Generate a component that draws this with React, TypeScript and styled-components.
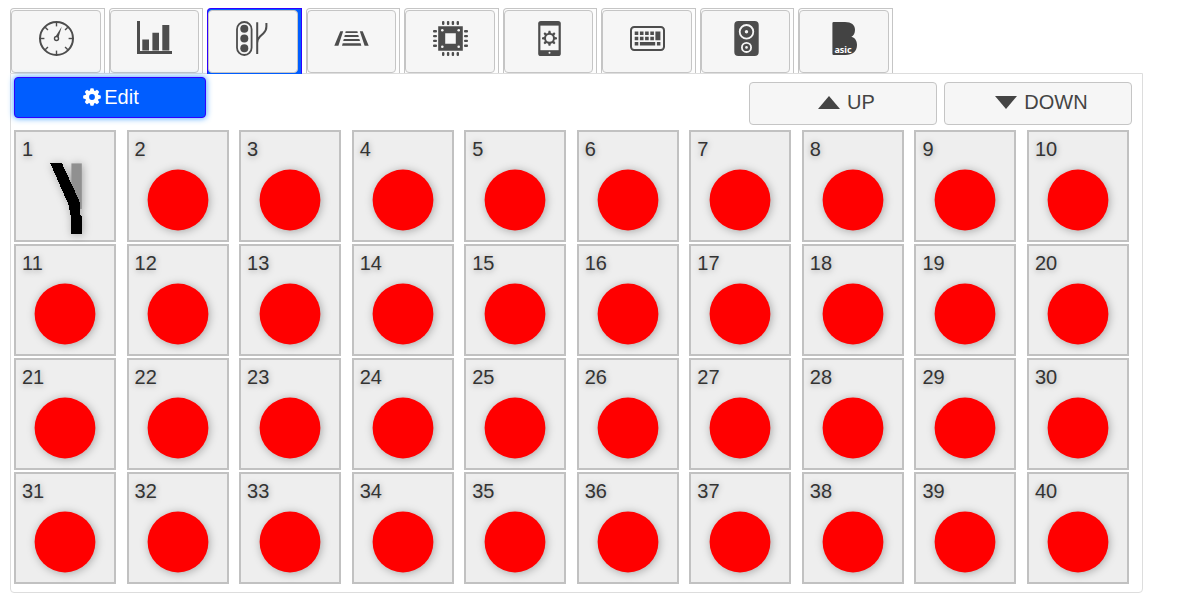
import React, { useState } from "react";
import styled, { createGlobalStyle, css } from "styled-components";

const GlobalStyle = createGlobalStyle`
  *, *::before, *::after { box-sizing: border-box; }
  body {
    margin: 0;
    background: #fff;
    color: #444;
    font: 20px/24px "Liberation Sans", Arial, sans-serif;
  }
  button { font: inherit; color: inherit; cursor: pointer; }
`;

const Page = styled.main`
  padding: 8px 41px 14px 10px;
`;

const TabList = styled.nav`
  display: grid;
  grid-template-columns: repeat(9, 1fr);
  gap: 4px;
  max-width: 883px;
`;

const Tab = styled.div<{ $active: boolean }>`
  display: flex;
  padding: 1px 3px 0 0;
  border: 1px solid #c5c5c5;
  border-bottom: 0;
  border-radius: 4px 0 0 0;
  background: #fdfdfd;
  ${(p) =>
    p.$active &&
    css`
      position: relative;
      margin-bottom: -1px;
      border-color: #3000ff;
      border-bottom: 1px solid #005dff;
      background: #005dff;
    `}
`;

const TabButton = styled.button`
  flex: 1;
  display: flex;
  align-items: center;
  justify-content: center;
  height: 63px;
  padding: 0 0 6px 1px;
  border: 1px solid #c5c5c5;
  border-radius: 4px;
  background: #f6f6f6;
`;

const TabIcon = styled.svg`
  display: block;
  width: 35px;
  height: 35px;
  fill: #4d4d4d;
`;

const Panel = styled.section`
  padding: 3px 13px 8px 3px;
  border: 1px solid #ddd;
  border-radius: 0 0 4px 4px;
`;

const Toolbar = styled.div`
  display: flex;
  align-items: flex-start;
  justify-content: space-between;
  margin: 0 -3px 5px 0;
`;

const EditButton = styled.button`
  display: flex;
  align-items: center;
  justify-content: center;
  gap: 3px;
  width: 192px;
  height: 41px;
  padding: 0 0 1px 2px;
  border: 1px solid #3000ff;
  border-radius: 4px;
  background: #005dff;
  color: #fff;
  box-shadow: 0 0 6px #3399ff;
`;

const Pager = styled.div`
  display: flex;
  gap: 7px;
  padding-top: 5px;
`;

const PagerButton = styled.button`
  display: flex;
  align-items: center;
  justify-content: center;
  gap: 7px;
  width: 188px;
  height: 43px;
  padding: 0 0 3px 7px;
  border: 1px solid #c5c5c5;
  border-radius: 4px;
  background: #f6f6f6;
`;

const Board = styled.div`
  display: grid;
  grid-template-columns: repeat(10, 102px);
  justify-content: space-between;
  row-gap: 2px;
`;

const Cell = styled.button`
  display: flex;
  flex-direction: column;
  height: 112px;
  padding: 7px 6px 0;
  border: 2px solid #c1c1c1;
  background: #eee;
  text-align: left;
`;

const CellNumber = styled.span`
  line-height: 20px;
  color: #333;
  text-shadow: 0 1px 6px rgba(0, 0, 0, 0.35);
`;

const Aspect = styled.svg`
  display: block;
  align-self: center;
  width: 60px;
  height: 82px;
  overflow: visible;
  filter: drop-shadow(1px 1px 4px rgba(0, 0, 0, 0.3));
`;

const GaugeIcon = () => (
  <TabIcon viewBox="0 0 35 35" aria-hidden="true">
    <circle cx="17.5" cy="17.5" r="16.5" fill="none" stroke="#4d4d4d" strokeWidth="2" />
    {[0, 45, 90, 135, 180, 225, 270, 315].map((a) => (
      <path key={a} d="M17.5 1.5V5.4" stroke="#4d4d4d" strokeWidth="1.4" transform={`rotate(${a} 17.5 17.5)`} />
    ))}
    <path d="M22.8 5.4L16.4 15.8L19.4 16.8Z" />
    <circle cx="17.5" cy="17.5" r="2" fill="#f6f6f6" stroke="#4d4d4d" strokeWidth="1.4" />
  </TabIcon>
);

const ChartIcon = () => (
  <TabIcon viewBox="0 0 35 35" aria-hidden="true">
    <path d="M0 0H3V30H35V33H0Z" />
    <path d="M5.3 18.5H12V29.6H5.3ZM15.4 11.8H22V29.6H15.4ZM25.3 4H32.3V29.6H25.3Z" />
  </TabIcon>
);

const SignalIcon = () => (
  <TabIcon viewBox="0 0 35 35" aria-hidden="true">
    <rect x="1" y="1" width="14.6" height="33" rx="7.3" fill="none" stroke="#4d4d4d" strokeWidth="1.8" />
    <circle cx="8.3" cy="7.8" r="4" />
    <circle cx="8.3" cy="17.5" r="4" />
    <circle cx="8.3" cy="27.2" r="4" />
    <path d="M21.2 1.3V33M30.4 2V5.5Q30.4 9.5 27.5 12.2L24 15.5Q21.4 18 21.2 22" fill="none" stroke="#4d4d4d" strokeWidth="2" />
  </TabIcon>
);

const TrackIcon = () => (
  <TabIcon viewBox="0 0 35 35" aria-hidden="true">
    <path d="M6.3 10.3H9.2L4.4 24.7H.3ZM25.8 10.3H28.7L34.7 24.7H30.6Z" />
    <path d="M11.7 10.3H23.4L23.8 12.1H11.3ZM10.8 14.1H24.3L24.8 15.9H10.3ZM9.8 18H25.4L26 19.9H9.2ZM8.7 22.3H26.6L27.3 24.7H8Z" />
  </TabIcon>
);

const ChipIcon = () => (
  <TabIcon viewBox="0 0 35 35" aria-hidden="true">
    <path fillRule="evenodd" d="M5.2 5.2H29.8V29.8H5.2ZM12.2 12.2V22.8H22.8V12.2Z" />
    {[0, 90, 180, 270].map((a) => (
      <g key={a} transform={`rotate(${a} 17.5 17.5)`}>
        {[9, 13.9, 18.7, 23.6].map((x) => (
          <rect key={x} x={x} y="0" width="2.4" height="4" rx="1" />
        ))}
        <circle cx="9.3" cy="9.3" r="1.3" fill="#f6f6f6" />
      </g>
    ))}
  </TabIcon>
);

const PhoneIcon = () => (
  <TabIcon viewBox="0 0 35 35" aria-hidden="true">
    <rect x="6.2" y="0" width="22.6" height="35" rx="2.6" />
    <rect x="8.4" y="4.6" width="18.2" height="24.6" fill="#f6f6f6" />
    <circle cx="17.5" cy="31.7" r="1" fill="#f6f6f6" />
    <circle cx="17.5" cy="17.3" r="4.5" fill="none" stroke="#4d4d4d" strokeWidth="2" />
    {[0, 45, 90, 135, 180, 225, 270, 315].map((a) => (
      <path key={a} d="M16.6 9.8H18.4L19 12.6H16Z" transform={`rotate(${a} 17.5 17.3)`} />
    ))}
  </TabIcon>
);

const KeyboardIcon = () => (
  <TabIcon viewBox="0 0 35 35" aria-hidden="true">
    <rect x="1" y="6" width="33" height="23" rx="3.2" fill="none" stroke="#4d4d4d" strokeWidth="2" />
    {[4.7, 9.9, 15.1, 20.3].map((x) => (
      <path key={x} d={`M${x} 10.4h3.6v3.6h-3.6zM${x} 15.7h3.6v3.5h-3.6z`} />
    ))}
    <path d="M25.4 10.4H30.4V19.2H25.4ZM4.7 21H8.3V24.5H4.7ZM9.9 21H25.2V24.5H9.9ZM26.9 21H30.4V24.5H26.9Z" />
  </TabIcon>
);

const SpeakerIcon = () => (
  <TabIcon viewBox="0 0 35 35" aria-hidden="true">
    <rect x="5.3" y="0" width="24.4" height="35" rx="4" />
    <g fill="none" stroke="#f6f6f6" strokeWidth="1.8">
      <circle cx="17.5" cy="10.8" r="6.8" />
      <circle cx="17.5" cy="26.4" r="4.6" />
    </g>
    <circle cx="17.5" cy="10.8" r="1.7" fill="#f6f6f6" />
    <circle cx="17.5" cy="26.4" r="1.3" fill="#f6f6f6" />
  </TabIcon>
);

const BasicIcon = () => (
  <TabIcon viewBox="0 0 35 35" aria-hidden="true">
    <path
      fill="#434343"
      d="M5.4 2.2Q5.4 1 6.6 1H18C24.4 1 28 3.8 28 8.8C28 12.4 26.6 14.6 24.4 15.8C27.8 16.8 30 19.6 30 23.8C30 30.6 25.6 34 18.4 34H6.6Q5.4 34 5.4 32.8Z"
    />
    <text x="7.4" y="31.7" fill="#fff" fontFamily="'Noto Sans', sans-serif" fontSize="9" fontWeight="700">
      asic
    </text>
  </TabIcon>
);

const CogIcon = () => (
  <svg width="18" height="18" viewBox="0 0 18 18" fill="#fff" aria-hidden="true">
    {[0, 45, 90, 135, 180, 225, 270, 315].map((a) => (
      <path key={a} d="M7.4 .4Q9 -.1 10.6 .4L11.4 4H6.6Z" transform={`rotate(${a} 9 9)`} />
    ))}
    <circle cx="9" cy="9" r="4.8" fill="none" stroke="#fff" strokeWidth="3.8" />
  </svg>
);

const TABS = [
  { name: "Speed", Icon: GaugeIcon },
  { name: "Statistics", Icon: ChartIcon },
  { name: "Accessories", Icon: SignalIcon },
  { name: "Track", Icon: TrackIcon },
  { name: "Decoder", Icon: ChipIcon },
  { name: "Device", Icon: PhoneIcon },
  { name: "Keyboard", Icon: KeyboardIcon },
  { name: "Sound", Icon: SpeakerIcon },
  { name: "Basic", Icon: BasicIcon },
];

const Turnout = () => (
  <Aspect viewBox="0 0 60 82" aria-hidden="true">
    <path d="M36.4 4.4H46.8V50H36.4Z" fill="#909090" />
    <path
      d="M15.3 4.4H27L43.7 40.4Q45.3 43.5 45.3 47V56L46.8 57V74.8H36.4V57L35.3 56L33.7 46.4Q33 43 31 40Z"
      fill="#000"
      shapeRendering="crispEdges"
    />
  </Aspect>
);

const Lamp = () => (
  <Aspect viewBox="0 0 60 82" aria-hidden="true">
    <circle cx="30" cy="41" r="30.4" fill="#f00" />
  </Aspect>
);

export default function App() {
  const [active, setActive] = useState(2);
  const cells = Array.from({ length: 40 }, (_, i) => i + 1);

  return (
    <>
      <GlobalStyle />
      <Page>
        <TabList>
          {TABS.map(({ name, Icon }, i) => (
            <Tab key={name} $active={i === active}>
              <TabButton type="button" aria-label={name} aria-pressed={i === active} onClick={() => setActive(i)}>
                <Icon />
              </TabButton>
            </Tab>
          ))}
        </TabList>
        <Panel>
          <Toolbar>
            <EditButton type="button">
              <CogIcon />
              Edit
            </EditButton>
            <Pager>
              <PagerButton type="button">
                <svg width="22" height="13" viewBox="0 0 22 13" fill="#444" aria-hidden="true">
                  <path d="M0 13L11 0L22 13Z" />
                </svg>
                UP
              </PagerButton>
              <PagerButton type="button">
                <svg width="22" height="13" viewBox="0 0 22 13" fill="#444" aria-hidden="true">
                  <path d="M0 0H22L11 13Z" />
                </svg>
                DOWN
              </PagerButton>
            </Pager>
          </Toolbar>
          <Board>
            {cells.map((n) => (
              <Cell key={n} type="button">
                <CellNumber>{n}</CellNumber>
                {n === 1 ? <Turnout /> : <Lamp />}
              </Cell>
            ))}
          </Board>
        </Panel>
      </Page>
    </>
  );
}
